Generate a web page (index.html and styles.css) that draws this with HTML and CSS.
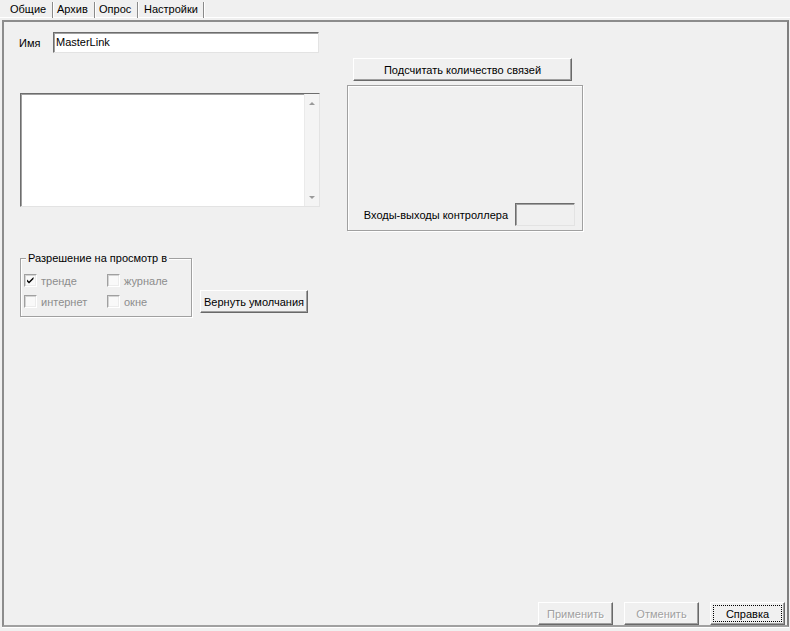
FILE: index.html
```html
<!DOCTYPE html>
<html lang="ru">
<head>
<meta charset="utf-8">
<title>MasterLink</title>
<link rel="stylesheet" href="styles.css">
</head>
<body>
<div class="tabs">
  <div class="tab t1">Общие</div>
  <div class="tab t2">Архив</div>
  <div class="tab t3">Опрос</div>
  <div class="tab t4">Настройки</div>
</div>
<div class="panel">
  <div class="main">
    <div class="left">
      <div class="name-row">
        <span class="lbl">Имя</span>
        <div class="edit">MasterLink</div>
      </div>
      <div class="memo">
        <div class="vscroll">
          <span class="arr up"></span>
          <span class="arr down"></span>
        </div>
      </div>
      <div class="perm">
        <div class="group">
          <span class="legend">Разрешение на просмотр в</span>
          <div class="cb-grid">
            <div class="cb-item"><span class="box"><svg width="9" height="9" viewBox="0 0 9 9"><path d="M1 3.5 L3 5.5 L7.5 1 L7.5 3 L3 7.5 L1 5.5 Z" fill="#000"/></svg></span>тренде</div>
            <div class="cb-item"><span class="box"></span>журнале</div>
            <div class="cb-item"><span class="box"></span>интернет</div>
            <div class="cb-item"><span class="box"></span>окне</div>
          </div>
        </div>
        <button class="btn reset">Вернуть умолчания</button>
      </div>
    </div>
    <div class="right">
      <button class="btn count">Подсчитать количество связей</button>
      <div class="iobox">
        <span class="io-lbl">Входы-выходы контроллера</span>
        <div class="io-field"></div>
      </div>
    </div>
  </div>
  <div class="footer">
    <button class="btn fbtn disabled">Применить</button>
    <button class="btn fbtn disabled">Отменить</button>
    <button class="btn fbtn focus">Справка</button>
  </div>
</div>
</body>
</html>
```
FILE: styles.css
```css
* { box-sizing: border-box; }

html, body {
  margin: 0;
  padding: 0;
}

body {
  width: 790px;
  height: 631px;
  overflow: hidden;
  background: #f0f0f0;
  font-family: "Liberation Sans", Arial, sans-serif;
  font-size: 11px;
  color: #000;
}

.tabs {
  display: flex;
  height: 20px;
  padding: 2px 0 0 4px;
  box-shadow: inset 0 -2px 0 #f0f0f0, inset 0 -3px 0 #ffffff;
}

.tab {
  height: 16px;
  line-height: 15px;
  border-right: 1px solid #8a8a8a;
  box-shadow: 1px 0 0 #ffffff;
  margin-right: 1px;
  white-space: nowrap;
}

.t1 { width: 49px; padding-left: 6px; }
.t2 { width: 41px; padding-left: 3px; }
.t3 { width: 42px; padding-left: 3px; }
.t4 { width: 65px; padding-left: 5px; }

.panel {
  margin-left: 2px;
  width: 787px;
  height: 607px;
  border-style: solid;
  border-width: 2px;
  border-color: #8c8c8c #7f7f7f #a0a0a0 #8c8c8c;
  box-shadow: 0 1px 0 #ffffff;
  display: flex;
  flex-direction: column;
}

.main {
  display: flex;
  padding: 10px 0 0 15px;
}

.left {
  width: 301px;
  display: flex;
  flex-direction: column;
}

.name-row {
  display: flex;
  align-items: center;
  height: 21px;
}

.lbl { width: 34px; }

.edit {
  width: 266px;
  height: 21px;
  border: 1px solid;
  border-color: #6d6d6d #e3e3e3 #e3e3e3 #6d6d6d;
  box-shadow: inset 1px 1px 0 #a0a0a0;
  background: #ffffff;
  padding: 0 0 0 2px;
  line-height: 19px;
}

.memo {
  margin: 40px 0 0 1px;
  width: 300px;
  height: 114px;
  border: 1px solid;
  border-color: #6d6d6d #e3e3e3 #e3e3e3 #6d6d6d;
  box-shadow: inset 1px 1px 0 #a0a0a0;
  background: #ffffff;
  display: flex;
  justify-content: flex-end;
}

.vscroll {
  width: 15px;
  height: 100%;
  background: #f4f4f4;
  border-left: 1px solid #eaeaea;
  display: flex;
  flex-direction: column;
  justify-content: space-between;
  align-items: center;
  padding: 8px 0 7px;
}

.arr {
  width: 0;
  height: 0;
  border-left: 3px solid transparent;
  border-right: 3px solid transparent;
}

.arr.up { border-bottom: 3px solid #9a9a9a; }
.arr.down { border-top: 3px solid #9a9a9a; }

.perm {
  display: flex;
  align-items: flex-start;
  margin-top: 51px;
  margin-left: 1px;
}

.group {
  position: relative;
  width: 172px;
  height: 59px;
  border: 1px solid #a0a0a0;
  box-shadow: inset 1px 1px 0 #ffffff, 1px 1px 0 #ffffff;
  padding: 15px 0 0 3px;
}

.legend {
  position: absolute;
  top: -7px;
  left: 5px;
  padding: 0 2px;
  line-height: 13px;
  background: #f0f0f0;
  white-space: nowrap;
}

.cb-grid {
  display: grid;
  grid-template-columns: 83px auto;
  row-gap: 8px;
}

.cb-item {
  display: flex;
  align-items: center;
  gap: 4px;
  height: 13px;
  color: #8d8d8d;
  white-space: nowrap;
}

.box {
  width: 13px;
  height: 13px;
  flex: none;
  border: 1px solid;
  border-color: #a0a0a0 #ffffff #ffffff #a0a0a0;
  box-shadow: inset 1px 1px 0 #d4d4d4, inset -1px -1px 0 #ececec;
  background: #f9f9f9;
  display: flex;
  align-items: center;
  justify-content: center;
}

.box svg { display: block; }

.btn {
  height: 23px;
  margin: 0;
  padding: 0;
  background: #f0f0f0;
  border: 1px solid;
  border-color: #ffffff #696969 #696969 #ffffff;
  box-shadow: inset -1px -1px 0 #a0a0a0;
  font-family: inherit;
  font-size: 11px;
  color: #000;
  white-space: nowrap;
}

.reset {
  width: 108px;
  margin: 32px 0 0 8px;
}

.right {
  margin-left: 27px;
  padding-top: 26px;
  display: flex;
  flex-direction: column;
  align-items: flex-start;
}

.count {
  width: 219px;
  margin-left: 6px;
}

.iobox {
  margin-top: 4px;
  width: 236px;
  height: 146px;
  border: 1px solid #a0a0a0;
  box-shadow: inset 1px 1px 0 #ffffff, 1px 1px 0 #ffffff;
  display: flex;
  align-items: center;
  align-content: flex-end;
  justify-content: flex-end;
  flex-wrap: wrap;
  gap: 7px;
  padding: 0 7px 4px 0;
}

.io-field {
  width: 60px;
  height: 23px;
  border: 1px solid;
  border-color: #6d6d6d #e3e3e3 #e3e3e3 #6d6d6d;
  box-shadow: inset 1px 1px 0 #a0a0a0;
  background: #f0f0f0;
}

.footer {
  margin-top: auto;
  display: flex;
  justify-content: flex-end;
  gap: 11px;
  padding: 0 2px 0 0;
}

.fbtn { width: 75px; }

.disabled {
  color: #a0a0a0;
  text-shadow: 1px 1px 0 #ffffff;
}

.focus {
  outline: 1px dotted #000;
  outline-offset: -4px;
}
```
